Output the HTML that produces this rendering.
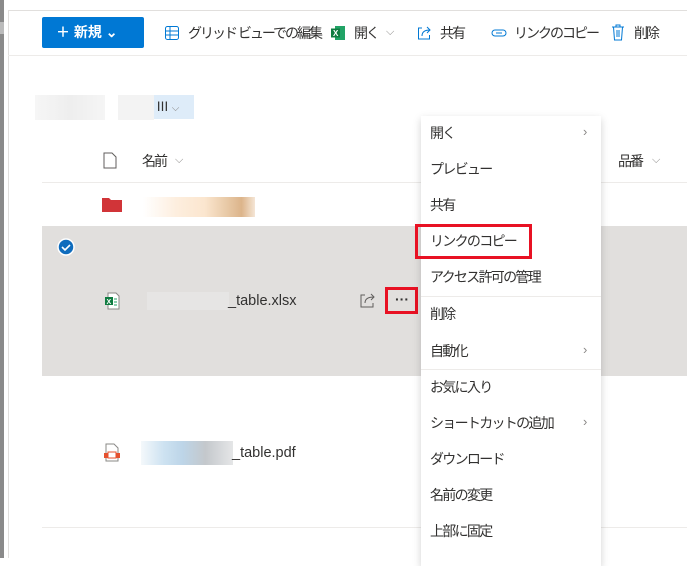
<!DOCTYPE html>
<html><head><meta charset="utf-8"><style>
*{margin:0;padding:0;box-sizing:border-box}
body{width:687px;height:558px;overflow:hidden;background:#fff;font-family:"Liberation Sans","Noto Sans CJK JP",sans-serif;color:#323130;position:relative}
.a{position:absolute}
.t{position:absolute;font-size:14px;white-space:nowrap;line-height:18px}
.j{letter-spacing:-2px}
.mi{position:absolute;left:430px;font-size:14px;color:#323130;line-height:18px;letter-spacing:-1.7px;white-space:nowrap}
.chev{position:absolute;left:583px;font-size:13px;color:#8a8886}
</style></head><body>
<div class="a" style="left:0;top:0;width:4px;height:558px;background:#8a8a8a"></div>
<div class="a" style="left:0;top:22px;width:4px;height:12px;background:#bbb"></div>
<div class="a" style="left:8px;top:10px;width:1px;height:548px;background:#e1dfdd"></div>
<div class="a" style="left:8px;top:10px;width:679px;height:1px;background:#e1dfdd"></div>
<div class="a" style="left:8px;top:55px;width:679px;height:1px;background:#edebe9"></div>

<div class="a" style="left:42px;top:17px;width:102px;height:31px;background:#0078d4;border-radius:2px;color:#fff;font-size:14px;font-weight:bold;line-height:31px;padding-left:14px">＋ 新規 ⌄</div>
<svg class="a" style="left:164px;top:25px" width="16" height="16"><rect x="1.5" y="1.5" width="13" height="13" rx="2" fill="none" stroke="#0078d4"/><path d="M1.5 6H14.5M1.5 10H14.5M6 1.5V14.5" stroke="#0078d4"/></svg>
<div class="t j" style="left:188px;top:24px">グリッド ビューでの編集</div>
<svg class="a" style="left:330px;top:25px" width="16" height="16"><rect x="5" y="1" width="10" height="14" fill="#21a366"/><rect x="1" y="3.5" width="9" height="9" fill="#107c41"/><text x="3" y="11" font-size="8" fill="#fff" font-family="Liberation Sans" font-weight="bold">X</text></svg>
<div class="t j" style="left:354px;top:24px">開く</div>
<div class="t" style="left:386px;top:23px;color:#8a8886;font-size:11px">⌵</div>
<svg class="a" style="left:416px;top:25px" width="16" height="16"><path d="M6 3H2.5v11h11V10" fill="none" stroke="#0078d4"/><path d="M6 11c0-4 3-6 8-6M11 2l3 3-3 3" fill="none" stroke="#0078d4"/></svg>
<div class="t j" style="left:440px;top:24px">共有</div>
<svg class="a" style="left:491px;top:26px" width="16" height="14"><rect x="1" y="4" width="14" height="6" rx="3" fill="none" stroke="#0078d4"/><path d="M5 7h6" stroke="#0078d4"/></svg>
<div class="t j" style="left:514px;top:24px">リンクのコピー</div>
<svg class="a" style="left:611px;top:24px" width="14" height="17"><path d="M1 3h12M5 3V1h4v2M2.5 3l1 13h7l1-13M6 6v7M8 6v7" fill="none" stroke="#0078d4"/></svg>
<div class="t j" style="left:634px;top:24px">削除</div>

<div class="a" style="left:35px;top:95px;width:70px;height:25px;background:linear-gradient(90deg,#f6f6f6,#eee,#f5f5f5)"></div>
<div class="a" style="left:118px;top:95px;width:36px;height:25px;background:#f3f3f3"></div>
<div class="a" style="left:154px;top:95px;width:40px;height:24px;background:#deecf9;font-size:13px;line-height:24px;padding-left:2px">Ⅲ<span style="color:#8a8886;font-size:10px"> ⌵</span></div>

<svg class="a" style="left:103px;top:152px" width="14" height="17"><path d="M1 1h8l4 4v11H1z" fill="none" stroke="#605e5c"/></svg>
<div class="t j" style="left:142px;top:152px">名前</div>
<div class="t" style="left:175px;top:151px;color:#8a8886;font-size:11px">⌵</div>
<div class="t j" style="left:618px;top:152px">品番</div>
<div class="t" style="left:652px;top:151px;color:#8a8886;font-size:11px">⌵</div>
<div class="a" style="left:42px;top:182px;width:645px;height:1px;background:#edebe9"></div>

<svg class="a" style="left:102px;top:197px" width="20" height="15"><path d="M0 1h7l2 2h11v12H0z" fill="#d13438"/></svg>
<div class="a" style="left:143px;top:197px;width:112px;height:20px;background:linear-gradient(90deg,#fff,#fdeede 30%,#fbe6cf 55%,#e8c9a6 75%,#dcb48a 88%,#f5e6d6)"></div>

<div class="a" style="left:42px;top:226px;width:645px;height:150px;background:#e1dfdd"></div>
<svg class="a" style="left:57px;top:238px" width="18" height="18"><circle cx="9" cy="9" r="8" fill="#0f6cbd" stroke="#fff" stroke-width="1.5"/><path d="M5 9l3 3 5-5" fill="none" stroke="#fff" stroke-width="1.6"/></svg>
<svg class="a" style="left:104px;top:292px" width="16" height="18"><path d="M4 1h8l3 3v13H4z" fill="#fff" stroke="#8a8886"/><rect x="1" y="5" width="8" height="8" fill="#107c41"/><text x="2.5" y="12" font-size="7" fill="#fff" font-weight="bold">X</text><path d="M10 7h3M10 10h3M10 13h3" stroke="#21a366"/></svg>
<div class="a" style="left:147px;top:292px;width:82px;height:18px;background:#e6e5e4"></div>
<div class="t" style="left:228px;top:292px;font-size:14.5px">_table.xlsx</div>
<svg class="a" style="left:359px;top:291px" width="18" height="18"><path d="M6 4H2v12h12v-4" fill="none" stroke="#605e5c"/><path d="M6 12c0-4 3-6 9-6M12 3l3 3-3 3" fill="none" stroke="#605e5c"/></svg>
<div class="a" style="left:385px;top:287px;width:33px;height:27px;border:3px solid #e81123"></div>
<div class="t" style="left:395px;top:290px;font-size:14px;font-weight:bold">···</div>

<svg class="a" style="left:104px;top:443px" width="16" height="19"><path d="M2 1h8l4 4v13H2z" fill="#fff" stroke="#8a8886"/><rect x="0" y="10" width="16" height="5" fill="#e5512f"/><rect x="4" y="9" width="8" height="6" fill="#fff" stroke="#e5512f"/></svg>
<div class="a" style="left:141px;top:441px;width:92px;height:24px;background:linear-gradient(90deg,#f4f8fb,#cde2f1 25%,#bdd5e8 45%,#c4c8cc 70%,#e5e6e7)"></div>
<div class="t" style="left:232px;top:444px;font-size:14.5px">_table.pdf</div>
<div class="a" style="left:42px;top:527px;width:645px;height:1px;background:#edebe9"></div>

<div class="a" style="left:601px;top:148px;width:14px;height:28px;background:#fff"></div>
<div class="a" style="left:421px;top:116px;width:180px;height:450px;background:#fff;box-shadow:0 3px 8px rgba(0,0,0,.18)"></div>
<div class="mi" style="top:124px">開く</div><div class="chev" style="top:124px">›</div>
<div class="mi" style="top:160px">プレビュー</div>
<div class="mi" style="top:196px">共有</div>
<div class="mi" style="top:232px">リンクのコピー</div>
<div class="mi" style="top:268px">アクセス許可の管理</div>
<div class="a" style="left:421px;top:296px;width:180px;height:1px;background:#edebe9"></div>
<div class="mi" style="top:305px">削除</div>
<div class="mi" style="top:342px">自動化</div><div class="chev" style="top:342px">›</div>
<div class="a" style="left:421px;top:369px;width:180px;height:1px;background:#edebe9"></div>
<div class="mi" style="top:378px">お気に入り</div>
<div class="mi" style="top:414px">ショートカットの追加</div><div class="chev" style="top:414px">›</div>
<div class="mi" style="top:450px">ダウンロード</div>
<div class="mi" style="top:486px">名前の変更</div>
<div class="mi" style="top:522px">上部に固定</div>
<div class="a" style="left:415px;top:224px;width:117px;height:35px;border:3px solid #e81123"></div>
</body></html>
